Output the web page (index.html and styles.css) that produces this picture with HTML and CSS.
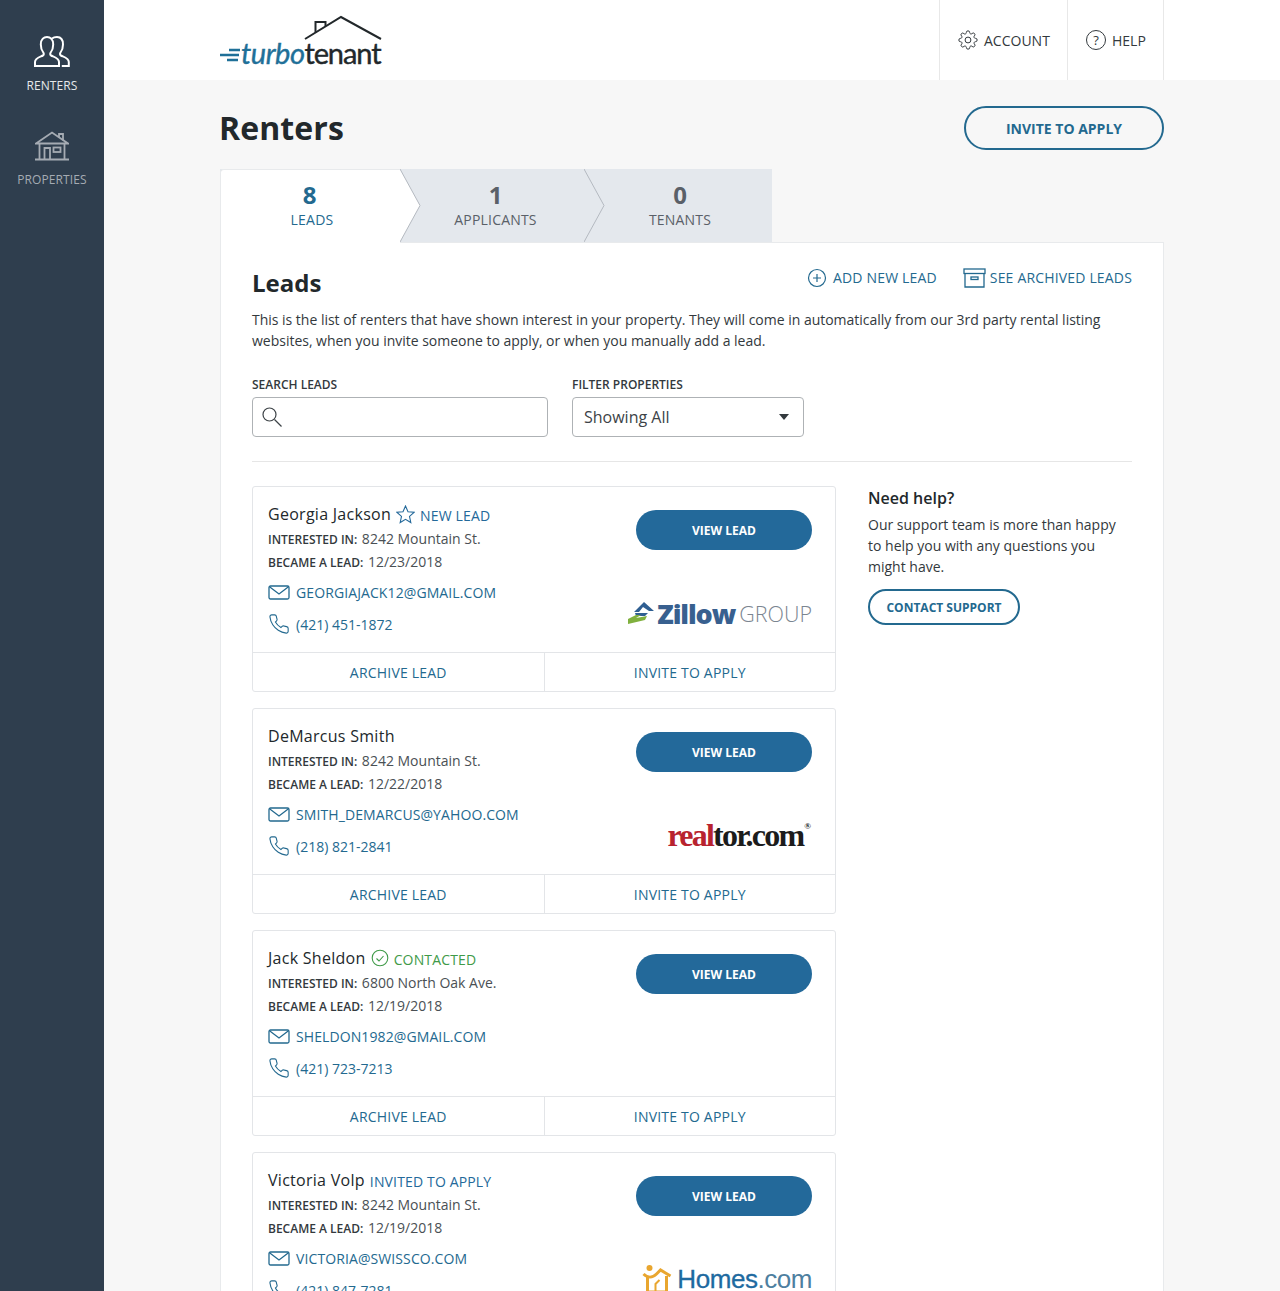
FILE: index.html
```html
<!DOCTYPE html>
<html lang="en">
<head>
    <meta charset="UTF-8">
    <meta name="viewport" content="width=device-width, initial-scale=1.0">
    <title>Renters</title>
    <link rel="stylesheet" href="styles.css">
</head>
<body>
    <svg class="icon-defs" width="0" height="0">
        <symbol id="i-mail" viewBox="0 0 22 15">
            <rect x="1" y="1" width="20" height="13" rx="1.5" fill="none" stroke="currentColor" stroke-width="1.3"/>
            <path d="M1.5 1.8 11 9l9.5-7.2" fill="none" stroke="currentColor" stroke-width="1.3"/>
        </symbol>
        <symbol id="i-phone" viewBox="0 0 24 24">
            <path d="M22 16.92v3a2 2 0 0 1-2.18 2 19.79 19.79 0 0 1-8.63-3.07 19.5 19.5 0 0 1-6-6 19.79 19.79 0 0 1-3.07-8.67A2 2 0 0 1 4.11 2h3a2 2 0 0 1 2 1.72 12.84 12.84 0 0 0 .7 2.81 2 2 0 0 1-.45 2.11L8.09 9.91a16 16 0 0 0 6 6l1.27-1.27a2 2 0 0 1 2.11-.45 12.84 12.84 0 0 0 2.81.7A2 2 0 0 1 22 16.92z" fill="none" stroke="currentColor" stroke-width="1.2"/>
        </symbol>
    </svg>

    <div class="layout">
        <nav class="sidebar">
            <a class="side-item active">
                <svg width="36" height="31" viewBox="0 0 36 31" fill="none" stroke="currentColor" stroke-width="2">
                    <path d="M1 30v-4c0-4 5-5 8-6.500 1-.6 1-2 .3-3-2-2.500-2.500-5-2.500-8C6.800 3 10 1 13 1s6.200 2 6.200 7.500c0 3-.5 5.500-2.500 8-.7 1-.7 2.400.3 3 3 1.500 8 2.500 8 6.500v4z"/>
                    <path d="M18 2.500C19.500 1.300 21 1 23 1c3 0 6 2 6 7.500 0 3-.5 5.500-2.500 8-.7 1-.7 2.400.3 3 3 1.500 8 2.500 8 6.500v4h-7"/>
                </svg>
                <span>RENTERS</span>
            </a>
            <a class="side-item">
                <svg width="34" height="30" viewBox="0 0 34 30" fill="none" stroke="currentColor" stroke-width="1.800">
                    <path d="M1 12.500 17 1.500l16 11H1z"/>
                    <path d="M24 6.500V3h4v6.500"/>
                    <path d="M4.500 13v15.500M29.500 13v15.500M0 28.500h34"/>
                    <path d="M9.500 28.500V17h5.500v11.500"/>
                    <rect x="18.500" y="16.500" width="7" height="4.500"/>
                </svg>
                <span>PROPERTIES</span>
            </a>
        </nav>

        <div class="main">
            <header class="topbar">
                <div class="logo">
                    <svg class="logo-roof" width="78" height="25" viewBox="0 0 78 25" fill="none" stroke="#22282b" stroke-width="2">
                        <path d="M1 24 37 2l40 22"/>
                        <path d="M11.500 17.500V7h10v4"/>
                    </svg>
                    <div class="logo-word">
                        <svg class="logo-speed" width="21" height="14" viewBox="0 0 21 14" fill="none" stroke="#1f7098" stroke-width="2.400">
                            <path d="M9 2h11M0 7h19M7 12h11"/>
                        </svg>
                        <span class="logo-turbo">turbo</span><span class="logo-tenant">tenant</span>
                    </div>
                </div>
                <div class="top-links">
                    <a class="top-link top-account">
                        <svg width="20" height="20" viewBox="0 0 24 24" fill="none" stroke="currentColor" stroke-width="1.200">
                            <circle cx="12" cy="12" r="3.500"/>
                            <path d="M19.400 15a1.650 1.650 0 0 0 .33 1.820l.06.06a2 2 0 0 1 0 2.830 2 2 0 0 1-2.830 0l-.06-.06a1.650 1.650 0 0 0-1.820-.33 1.650 1.650 0 0 0-1 1.510V21a2 2 0 0 1-2 2 2 2 0 0 1-2-2v-.09A1.650 1.650 0 0 0 9 19.400a1.650 1.650 0 0 0-1.820.33l-.06.06a2 2 0 0 1-2.830 0 2 2 0 0 1 0-2.830l.06-.06a1.650 1.650 0 0 0 .33-1.820 1.650 1.650 0 0 0-1.510-1H3a2 2 0 0 1-2-2 2 2 0 0 1 2-2h.09A1.650 1.650 0 0 0 4.600 9a1.650 1.650 0 0 0-.33-1.820l-.06-.06a2 2 0 0 1 0-2.830 2 2 0 0 1 2.830 0l.06.06a1.650 1.650 0 0 0 1.820.33H9a1.650 1.650 0 0 0 1-1.510V3a2 2 0 0 1 2-2 2 2 0 0 1 2 2v.09a1.650 1.650 0 0 0 1 1.510 1.650 1.650 0 0 0 1.820-.33l.06-.06a2 2 0 0 1 2.830 0 2 2 0 0 1 0 2.830l-.06.06a1.650 1.650 0 0 0-.33 1.820V9a1.650 1.650 0 0 0 1.510 1H21a2 2 0 0 1 2 2 2 2 0 0 1-2 2h-.09a1.650 1.650 0 0 0-1.510 1z"/>
                        </svg>
                        ACCOUNT
                    </a>
                    <a class="top-link top-help">
                        <span class="help-circle">?</span>
                        HELP
                    </a>
                </div>
            </header>

            <div class="content">
                <div class="page-head">
                    <h1>Renters</h1>
                    <a class="btn-outline btn-invite">INVITE TO APPLY</a>
                </div>

                <div class="tabs">
                    <div class="tab tab-leads active">
                        <b>8</b>
                        <span>LEADS</span>
                        <svg class="tab-arrow" width="21" height="73" viewBox="0 0 21 73"><path d="M0 0 20 36.500 0 73z" fill="#fff"/><path d="M0 0 20 36.500 0 73" fill="none" stroke="#b4b9c0"/></svg>
                    </div>
                    <div class="tab tab-applicants">
                        <b>1</b>
                        <span>APPLICANTS</span>
                        <svg class="tab-arrow" width="21" height="73" viewBox="0 0 21 73"><path d="M0 0 20 36.500 0 73" fill="none" stroke="#b4b9c0"/></svg>
                    </div>
                    <div class="tab tab-tenants">
                        <b>0</b>
                        <span>TENANTS</span>
                    </div>
                </div>

                <section class="panel">
                    <div class="panel-head">
                        <h2>Leads</h2>
                        <div class="panel-links">
                            <a class="panel-link">
                                <svg width="20" height="20" viewBox="0 0 20 20" fill="none" stroke="currentColor" stroke-width="1.200">
                                    <circle cx="10" cy="10" r="8.500"/>
                                    <path d="M10 6v8M6 10h8"/>
                                </svg>
                                ADD NEW LEAD
                            </a>
                            <a class="panel-link link-archive">
                                <svg width="23" height="20" viewBox="0 0 23 20" fill="none" stroke="currentColor" stroke-width="1.300">
                                    <rect x="1" y="1" width="21" height="4.500"/>
                                    <path d="M2 5.500V19h19V5.500"/>
                                    <rect x="8" y="9" width="7" height="2.500"/>
                                </svg>
                                SEE ARCHIVED LEADS
                            </a>
                        </div>
                    </div>
                    <p class="panel-desc">This is the list of renters that have shown interest in your property. They will come in automatically from our 3rd party rental listing websites, when you invite someone to apply, or when you manually add a lead.</p>

                    <div class="filters">
                        <div class="field">
                            <label>SEARCH LEADS</label>
                            <div class="search-box">
                                <svg width="22" height="22" viewBox="0 0 22 22" fill="none" stroke="#3d4347" stroke-width="1.200">
                                    <circle cx="8.500" cy="8.500" r="6.500"/>
                                    <path d="m13.500 13.500 7 7"/>
                                </svg>
                            </div>
                        </div>
                        <div class="field">
                            <label>FILTER PROPERTIES</label>
                            <div class="select-box">
                                Showing All
                                <span class="caret"></span>
                            </div>
                        </div>
                    </div>

                    <div class="leads-wrap">
                        <div class="leads">
                            <article class="card">
                                <div class="card-body">
                                    <div class="card-info">
                                        <div class="card-name">
                                            <span class="name">Georgia Jackson</span>
                                            <svg class="status-icon" width="19" height="19" viewBox="0 0 19 19" fill="none" stroke="#24699a" stroke-width="1.100"><path d="m9.500 1 2.500 5.700 6 .6-4.500 4.100 1.300 6.100-5.300-3.200-5.300 3.200 1.300-6.100L1 7.300l6-.6z"/></svg>
                                            <span class="status status-new">NEW LEAD</span>
                                        </div>
                                        <div class="meta"><b>INTERESTED IN:</b> 8242 Mountain St.</div>
                                        <div class="meta"><b>BECAME A LEAD:</b> 12/23/2018</div>
                                        <a class="contact contact-mail"><svg width="22" height="15"><use href="#i-mail"/></svg>GEORGIAJACK12@GMAIL.COM</a>
                                        <a class="contact"><svg width="22" height="22"><use href="#i-phone"/></svg>(421) 451-1872</a>
                                    </div>
                                    <div class="card-side">
                                        <a class="btn-view">VIEW LEAD</a>
                                        <div class="source source-zillow">
                                            <svg width="28" height="24" viewBox="0 0 28 24">
                                                <path d="M7 11 17 1l10 9h-5l-6-4-4 5z" fill="#2f5f92"/>
                                                <path d="M8 12h13l-3 3H9z" fill="#2f5f92"/>
                                                <path d="M1 18 9 14l5 0-5 3 11-2-2 4-17 4z" fill="#80b03e"/>
                                            </svg>
                                            <span class="z-name">Zillow</span><span class="z-group">GROUP</span>
                                        </div>
                                    </div>
                                </div>
                                <div class="card-foot">
                                    <a>ARCHIVE LEAD</a>
                                    <a>INVITE TO APPLY</a>
                                </div>
                            </article>

                            <article class="card">
                                <div class="card-body">
                                    <div class="card-info">
                                        <div class="card-name">
                                            <span class="name">DeMarcus Smith</span>
                                        </div>
                                        <div class="meta"><b>INTERESTED IN:</b> 8242 Mountain St.</div>
                                        <div class="meta"><b>BECAME A LEAD:</b> 12/22/2018</div>
                                        <a class="contact contact-mail"><svg width="22" height="15"><use href="#i-mail"/></svg>SMITH_DEMARCUS@YAHOO.COM</a>
                                        <a class="contact"><svg width="22" height="22"><use href="#i-phone"/></svg>(218) 821-2841</a>
                                    </div>
                                    <div class="card-side">
                                        <a class="btn-view">VIEW LEAD</a>
                                        <div class="source source-realtor"><span class="r-real">real</span><span class="r-tor">tor.com</span><sup>®</sup></div>
                                    </div>
                                </div>
                                <div class="card-foot">
                                    <a>ARCHIVE LEAD</a>
                                    <a>INVITE TO APPLY</a>
                                </div>
                            </article>

                            <article class="card">
                                <div class="card-body">
                                    <div class="card-info">
                                        <div class="card-name">
                                            <span class="name">Jack Sheldon</span>
                                            <svg class="status-icon" width="18" height="18" viewBox="0 0 18 18" fill="none" stroke="#3f9a48" stroke-width="1.100"><circle cx="9" cy="9" r="7.800"/><path d="m5.500 9.500 2.500 2.500 4.500-5"/></svg>
                                            <span class="status status-contacted">CONTACTED</span>
                                        </div>
                                        <div class="meta"><b>INTERESTED IN:</b> 6800 North Oak Ave.</div>
                                        <div class="meta"><b>BECAME A LEAD:</b> 12/19/2018</div>
                                        <a class="contact contact-mail"><svg width="22" height="15"><use href="#i-mail"/></svg>SHELDON1982@GMAIL.COM</a>
                                        <a class="contact"><svg width="22" height="22"><use href="#i-phone"/></svg>(421) 723-7213</a>
                                    </div>
                                    <div class="card-side">
                                        <a class="btn-view">VIEW LEAD</a>
                                    </div>
                                </div>
                                <div class="card-foot">
                                    <a>ARCHIVE LEAD</a>
                                    <a>INVITE TO APPLY</a>
                                </div>
                            </article>

                            <article class="card">
                                <div class="card-body">
                                    <div class="card-info">
                                        <div class="card-name">
                                            <span class="name">Victoria Volp</span>
                                            <span class="status status-new">INVITED TO APPLY</span>
                                        </div>
                                        <div class="meta"><b>INTERESTED IN:</b> 8242 Mountain St.</div>
                                        <div class="meta"><b>BECAME A LEAD:</b> 12/19/2018</div>
                                        <a class="contact contact-mail"><svg width="22" height="15"><use href="#i-mail"/></svg>VICTORIA@SWISSCO.COM</a>
                                        <a class="contact"><svg width="22" height="22"><use href="#i-phone"/></svg>(421) 847-7281</a>
                                    </div>
                                    <div class="card-side">
                                        <a class="btn-view">VIEW LEAD</a>
                                        <div class="source source-homes">
                                            <svg width="30" height="30" viewBox="0 0 29 30" fill="none" stroke="#e9a62f" stroke-width="3">
                                                <circle cx="7" cy="4" r="3" fill="#e9a62f" stroke="none"/>
                                                <path d="M1 10c4 4 9 4 13 0l4-4 10 6"/>
                                                <path d="M5 13v15h19V12"/>
                                                <path d="M13 28v-8l4-4" stroke-width="2"/>
                                            </svg>
                                            <span class="h-name">Homes</span><span class="h-com">.com</span>
                                        </div>
                                    </div>
                                </div>
                                <div class="card-foot">
                                    <a>ARCHIVE LEAD</a>
                                    <a>INVITE TO APPLY</a>
                                </div>
                            </article>
                        </div>

                        <aside class="help-box">
                            <h3>Need help?</h3>
                            <p>Our support team is more than happy to help you with any questions you might have.</p>
                            <a class="btn-outline btn-support">CONTACT SUPPORT</a>
                        </aside>
                    </div>
                </section>
            </div>
        </div>
    </div>
</body>
</html>
```

FILE: styles.css
```css
* {
    box-sizing: border-box;
}
html, body {
    margin: 0;
    height: 100vh;
    overflow: hidden;
}
body {
    font-family: "Open Sans", "Liberation Sans", sans-serif;
    font-size: 14px;
    color: #22282b;
    background: #f7f7f7;
}
.icon-defs {
    display: block;
    height: 0;
}
.layout {
    display: flex;
    height: 100vh;
}

/* sidebar */
.sidebar {
    width: 104px;
    flex-shrink: 0;
    background: #2f3e4e;
    padding-top: 36px;
    display: flex;
    flex-direction: column;
    align-items: center;
    gap: 37px;
}
.side-item {
    display: flex;
    flex-direction: column;
    align-items: center;
    gap: 11px;
    font-size: 12px;
    line-height: 16px;
    letter-spacing: 0.1px;
    color: #a5abb3;
}
.side-item.active {
    color: #fff;
}
.side-item.active span {
    color: #e6e8ea;
}

/* top bar */
.main {
    flex: 1;
    min-width: 0;
}
.topbar {
    height: 80px;
    background: #fff;
    padding: 0 116px;
    display: flex;
    justify-content: space-between;
}
.logo {
    width: 162px;
    padding-top: 15px;
    display: flex;
    flex-direction: column;
    align-items: flex-end;
}
.logo-word {
    display: flex;
    align-items: center;
    width: 162px;
    line-height: 26px;
    font-family: "Lato", sans-serif;
    font-size: 29px;
    -webkit-text-stroke: 0.4px;
}
.logo-speed {
    margin-top: 3px;
    flex-shrink: 0;
}
.logo-turbo {
    font-style: italic;
    letter-spacing: -0.5px;
    color: #1f7098;
}
.logo-tenant {
    letter-spacing: -1.1px;
    color: #22282b;
}
.top-links {
    display: flex;
}
.top-link {
    display: flex;
    align-items: center;
    border-left: 1px solid #e8e8e8;
    font-size: 14px;
    color: #33393d;
}
.top-account {
    width: 128px;
    padding-left: 18px;
    gap: 6px;
}
.top-help {
    width: 97px;
    padding-left: 18px;
    gap: 6px;
    border-right: 1px solid #e8e8e8;
}
.help-circle {
    width: 20px;
    height: 20px;
    border: 1px solid #33393d;
    border-radius: 50%;
    font-size: 13px;
    line-height: 18px;
    text-align: center;
}

/* page */
.content {
    padding: 0 116px;
}
.page-head {
    display: flex;
    justify-content: space-between;
    align-items: center;
    height: 89px;
    padding-top: 7px;
}
h1 {
    margin: -2px 0 0 -1px;
    font-size: 32px;
    font-weight: 700;
    letter-spacing: 0.1px;
}
.btn-outline {
    display: flex;
    align-items: center;
    justify-content: center;
    border: 2px solid #23698f;
    border-radius: 24px;
    color: #23698f;
    font-weight: 700;
}
.btn-invite {
    width: 200px;
    height: 44px;
    font-size: 14px;
}

/* tabs */
.tabs {
    display: flex;
    align-items: flex-start;
    height: 73px;
    width: 552px;
    background: #e4e8ed;
}
.tab {
    position: relative;
    display: flex;
    flex-direction: column;
    align-items: center;
    height: 73px;
    padding-top: 11px;
    color: #5a6068;
}
.tab b {
    font-size: 24px;
    line-height: 30px;
    font-weight: 700;
}
.tab span {
    font-size: 14px;
    line-height: 19px;
    letter-spacing: 0.2px;
}
.tab.active {
    background: #fff;
    color: #23698f;
    border: 1px solid #e8eaec;
    border-width: 1px 0 0 1px;
    border-radius: 4px 0 0 0;
    padding-top: 10px;
}
.tab-leads {
    width: 180px;
    padding-left: 3px;
}
.tab-leads.active {
    z-index: 2;
    height: 75px;
}
.tab-leads b {
    margin-right: 5px;
}
.tab-applicants {
    width: 184px;
    padding-left: 7px;
}
.tab-tenants {
    width: 188px;
    padding-left: 4px;
}
.tab-arrow {
    position: absolute;
    top: 0;
    left: 100%;
    z-index: 1;
}
.tab.active .tab-arrow {
    top: -1px;
}

/* main panel */
.panel {
    background: #fff;
    border: 1px solid #e8eaec;
    padding: 21px 31px 0;
    min-height: 1200px;
}
.panel-head {
    display: flex;
    justify-content: space-between;
    align-items: flex-start;
}
h2 {
    margin: 0;
    font-size: 24px;
    line-height: 38px;
    font-weight: 700;
}
.panel-links {
    display: flex;
    gap: 26px;
    padding-top: 4px;
}
.panel-link {
    display: flex;
    align-items: center;
    gap: 6px;
    font-size: 14px;
    line-height: 20px;
    letter-spacing: 0.17px;
    color: #23698f;
}
.link-archive {
    gap: 4px;
}
.panel-desc {
    margin: 7px 0 0;
    font-size: 14px;
    line-height: 21px;
    letter-spacing: -0.015px;
    color: #33393d;
}
.filters {
    display: flex;
    gap: 24px;
    margin-top: 26px;
    padding-bottom: 24px;
    border-bottom: 1px solid #e6e6e6;
}
.field label {
    display: block;
    font-size: 12px;
    line-height: 16px;
    font-weight: 600;
    color: #33393d;
    margin-bottom: 4px;
}
.search-box, .select-box {
    height: 40px;
    border: 1px solid #aeb2b5;
    border-radius: 4px;
    display: flex;
    align-items: center;
    background: #fff;
}
.search-box {
    width: 296px;
    padding-left: 8px;
}
.select-box {
    width: 232px;
    padding: 0 14px 0 11px;
    justify-content: space-between;
    font-size: 16px;
    color: #3d4347;
}
.caret {
    width: 0;
    height: 0;
    border-left: 5px solid transparent;
    border-right: 5px solid transparent;
    border-top: 6px solid #33393d;
}

/* lead cards */
.leads-wrap {
    display: flex;
    gap: 32px;
    margin-top: 24px;
}
.leads {
    width: 584px;
    flex-shrink: 0;
    display: flex;
    flex-direction: column;
    gap: 16px;
}
.card {
    height: 206px;
    flex-shrink: 0;
    background: #fff;
    border: 1px solid #e3e5e8;
    border-radius: 3px;
    display: flex;
    flex-direction: column;
}
.card-body {
    height: 165px;
    padding: 14px 23px 0 15px;
    display: flex;
    justify-content: space-between;
}
.card-name {
    display: flex;
    align-items: center;
    height: 26px;
}
.name {
    font-size: 16px;
    letter-spacing: 0.28px;
    color: #22282b;
}
.status-icon {
    margin-left: 5px;
}
.status {
    font-size: 14px;
    letter-spacing: 0.15px;
    margin-left: 5px;
    position: relative;
    top: 1px;
}
.status-new {
    color: #24699a;
}
.status-contacted {
    color: #3f9a48;
}
.meta {
    height: 23px;
    font-size: 14px;
    line-height: 23px;
    color: #4a5054;
}
.meta b {
    font-size: 12px;
    font-weight: 600;
    color: #33393d;
    margin-right: 1px;
}
.contact {
    display: flex;
    align-items: center;
    gap: 6px;
    font-size: 14px;
    height: 32px;
    color: #23698f;
}
.contact svg {
    flex-shrink: 0;
}
.contact-mail {
    margin-top: 3px;
    letter-spacing: 0.1px;
}
.card-side {
    width: 176px;
    padding-top: 9px;
    display: flex;
    flex-direction: column;
    align-items: flex-end;
}
.btn-view {
    width: 176px;
    height: 40px;
    border-radius: 20px;
    background: #23699a;
    color: #fff;
    font-size: 12px;
    font-weight: 700;
    display: flex;
    align-items: center;
    justify-content: center;
}
.source {
    display: flex;
    align-items: center;
    white-space: nowrap;
}
.source-zillow {
    margin-top: 48px;
    height: 30px;
}
.source-zillow svg {
    margin-right: 2px;
}
.z-name {
    font-size: 27px;
    font-weight: 800;
    letter-spacing: -1.1px;
    color: #38608f;
}
.z-group {
    font-size: 21.5px;
    font-weight: 300;
    color: #7b8590;
    margin-left: 4px;
}
.source-realtor {
    margin-top: 47px;
    height: 32px;
    font-family: "Liberation Serif", serif;
    font-size: 32px;
    font-weight: 700;
    letter-spacing: -1.8px;
    margin-right: 1px;
}
.source-realtor sup {
    font-size: 9px;
    align-self: flex-start;
    margin: 2px 0 0 1px;
    letter-spacing: 0;
}
.r-real {
    color: #b8232f;
}
.r-tor {
    color: #1c1c1c;
}
.source-homes {
    margin-top: 46px;
    height: 34px;
    font-family: "Liberation Sans", sans-serif;
    font-size: 26px;
    letter-spacing: -0.45px;
    -webkit-text-stroke: 0.3px;
}
.source-homes svg {
    margin-right: 5px;
}
.h-name {
    color: #1e6aa0;
}
.h-com {
    color: #4e7fa0;
    -webkit-text-stroke: 0;
}
.card-foot {
    height: 39px;
    border-top: 1px solid #e3e5e8;
    display: flex;
}
.card-foot a {
    flex: 1;
    display: flex;
    align-items: center;
    justify-content: center;
    font-size: 14px;
    letter-spacing: 0.2px;
    color: #23698f;
}
.card-foot a + a {
    border-left: 1px solid #e3e5e8;
}

/* help box */
.help-box {
    padding-top: 1px;
}
.help-box h3 {
    margin: 0;
    font-size: 16px;
    line-height: 22px;
    font-weight: 600;
}
.help-box p {
    margin: 5px 0 0;
    font-size: 14px;
    line-height: 21px;
    color: #33393d;
}
.btn-support {
    width: 152px;
    height: 36px;
    font-size: 12px;
    margin-top: 12px;
}
```
